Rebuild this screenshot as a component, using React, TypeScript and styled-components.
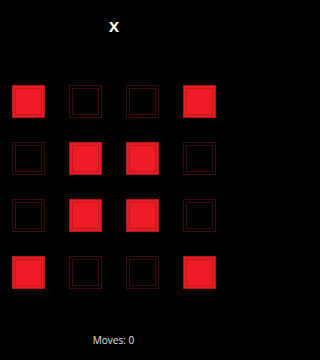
import styled, { createGlobalStyle } from 'styled-components';

const GlobalStyle = createGlobalStyle`
  html, body {
    margin: 0;
    padding: 0;
    background: #000;
  }
  #root {
    min-height: 360px;
  }
`;

const Screen = styled.div`
  width: 227px;
  height: 360px;
  background: #000;
  display: flex;
  flex-direction: column;
  align-items: center;
  font-family: 'Open Sans', 'Noto Sans', sans-serif;
`;

const Title = styled.div`
  margin-top: 16px;
  height: 20px;
  line-height: 20px;
  font-size: 15px;
  font-weight: 700;
  color: #fff;
  padding-left: 1px;
`;

const Board = styled.div`
  margin-top: 49px;
  display: grid;
  grid-template-columns: repeat(4, 33px);
  grid-auto-rows: 33px;
  column-gap: 24px;
  row-gap: 24px;
  padding-left: 1px;
`;

const Tile = styled.div<{ $on: boolean }>`
  box-sizing: border-box;
  width: 33px;
  height: 33px;
  padding: 2px;
  border: 1px solid ${(p) => (p.$on ? '#b5141b' : '#3b0b10')};
  background: ${(p) => (p.$on ? '#e91b23' : '#000')};
`;

const TileInner = styled.div<{ $on: boolean }>`
  box-sizing: border-box;
  width: 100%;
  height: 100%;
  border: 1px solid ${(p) => (p.$on ? '#c4161d' : '#3b0b10')};
  background: ${(p) => (p.$on ? '#ee1c25' : 'transparent')};
`;

const Moves = styled.div`
  margin-top: 44px;
  height: 14px;
  line-height: 14px;
  font-size: 10px;
  color: #e4e4e4;
`;

const board = [
  [1, 0, 0, 1],
  [0, 1, 1, 0],
  [0, 1, 1, 0],
  [1, 0, 0, 1],
];

function App() {
  return (
    <>
      <GlobalStyle />
      <Screen>
        <Title>X</Title>
        <Board>
          {board.flat().map((v, i) => (
            <Tile key={i} $on={v === 1}>
              <TileInner $on={v === 1} />
            </Tile>
          ))}
        </Board>
        <Moves>Moves: 0</Moves>
      </Screen>
    </>
  );
}

export default App;
